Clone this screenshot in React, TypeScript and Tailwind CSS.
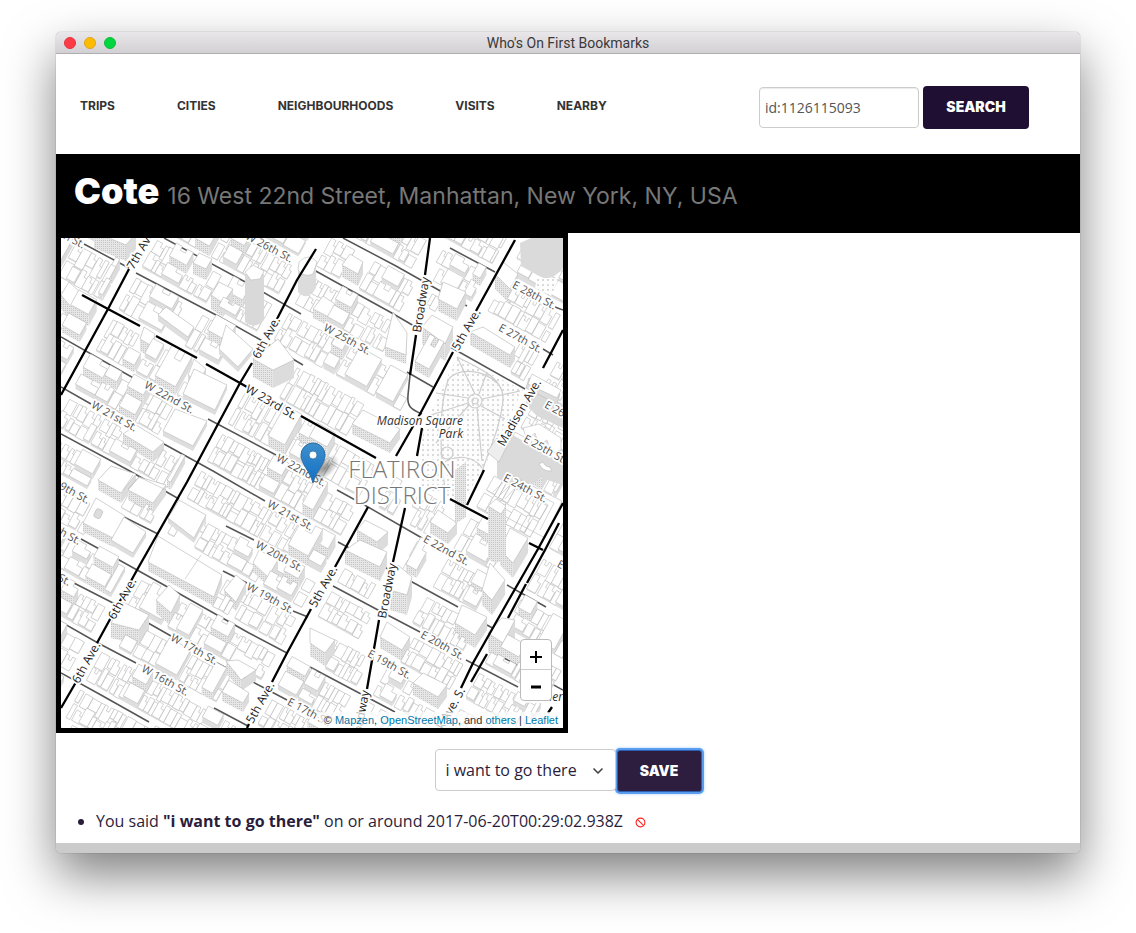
import React from "react";
import { ChevronDown } from "lucide-react";

type Point = [number, number];

const ANGLE = (29 * Math.PI) / 180;
const COS = Math.cos(ANGLE);
const SIN = Math.sin(ANGLE);

// Street grid space -> map space, with 6th Ave. and W 23rd St. as the origin.
const toMap = (s: number, t: number): Point => [
  179 + s * COS - t * SIN,
  145 + s * SIN + t * COS,
];

const fmt = (points: Point[]) =>
  points.map(([x, y]) => `${x.toFixed(1)},${y.toFixed(1)}`).join(" ");

const avenues = [-310, -151, 0, 172, 258, 341, 430];
const streets = [-310, -264, -221, -178, -134, -91, -48, 0, 47, 90, 132, 172, 214, 255, 296, 340, 382, 424];

const broadway: Point[] = [
  [369, 0], [364, 37], [355, 97], [349, 137], [351, 172], [361, 190],
  [356, 218], [344, 270], [332, 324], [318, 382], [306, 451], [299, 490],
];

const nearBroadway = (x: number, y: number) => {
  for (let i = 1; i < broadway.length; i++) {
    const [ax, ay] = broadway[i - 1];
    const [bx, by] = broadway[i];
    if (y >= ay && y <= by) {
      const k = (y - ay) / (by - ay);
      return Math.abs(x - (ax + (bx - ax) * k)) < 10;
    }
  }
  return false;
};

function random(seed: number) {
  let state = seed;
  return () => {
    state = (state * 1664525 + 1013904223) % 4294967296;
    return state / 4294967296;
  };
}

interface Building {
  y: number;
  roof: string;
  side: string;
  front: string;
  hatched: boolean;
}

// Roof corners (left, bottom, right, top) and height of the larger buildings.
const landmarks: number[][] = [
  [122, 156, 154, 172, 166, 147, 133, 131, 5],
  [102, 193, 132, 208, 146, 183, 114, 171, 5],
  [62, 196, 92, 214, 103, 204, 75, 187, 10],
  [97, 77, 127, 99, 133, 89, 105, 69, 6],
  [158, 111, 177, 129, 192, 111, 165, 87, 5],
  [192, 121, 212, 132, 233, 122, 217, 101, 18],
  [150, 57, 162, 65, 172, 51, 158, 44, 14],
  [132, 25, 145, 31, 151, 21, 138, 15, 11],
  [0, 57, 10, 69, 21, 56, 8, 44, 14],
  [33, -6, 65, 7, 75, -5, 45, -15, 16],
  [291, 186, 329, 205, 339, 191, 302, 172, 10],
  [361, 89, 384, 106, 392, 89, 371, 77, 17],
  [377, 61, 396, 71, 405, 54, 382, 44, 12],
  [324, 109, 345, 117, 346, 95, 332, 74, 9],
  [409, 94, 449, 117, 454, 109, 422, 89, 13],
  [434, 36, 449, 51, 457, 36, 442, 24, 15],
  [87, 324, 153, 359, 161, 337, 97, 298, 9],
  [22, 285, 52, 300, 64, 278, 35, 260, 9],
  [50, 302, 72, 315, 85, 294, 63, 279, 5],
  [50, 385, 78, 392, 88, 377, 62, 364, 15],
  [107, 280, 133, 300, 145, 277, 118, 262, 5],
  [192, 325, 207, 339, 217, 322, 198, 312, 9],
  [95, 362, 110, 375, 119, 357, 108, 347, 13],
  [165, 423, 180, 442, 195, 432, 177, 422, 11],
  [161, 454, 182, 465, 188, 455, 168, 442, 9],
  [67, 252, 92, 265, 105, 247, 78, 239, 10],
  [37, 242, 60, 255, 75, 236, 50, 228, 10],
  [163, 352, 175, 364, 185, 345, 175, 337, 9],
  [369, 284, 387, 295, 396, 285, 377, 272, 11],
  [394, 385, 414, 397, 426, 379, 401, 367, 13],
  [296, 292, 316, 304, 327, 294, 304, 282, 13],
  [284, 312, 319, 329, 326, 314, 299, 302, 14],
  [421, 352, 431, 362, 444, 342, 429, 325, 15],
  [319, 399, 341, 412, 349, 399, 326, 384, 11],
  [352, 445, 377, 459, 386, 447, 362, 435, 12],
  [329, 352, 346, 357, 351, 339, 337, 327, 20],
  [439, 312, 452, 325, 467, 300, 449, 290, 15],
  [249, 405, 264, 415, 274, 402, 249, 390, 13],
  [427, 395, 442, 405, 454, 382, 441, 380, 19],
  [79, 101, 91, 108, 94, 96, 83, 89, 12],
  [127, 137, 138, 144, 145, 131, 133, 121, 8],
  [281, 27, 297, 36, 302, 24, 289, 16, 12],
  [252, 71, 268, 79, 274, 66, 262, 58, 9],
];

const nearLandmark = (x: number, y: number) =>
  landmarks.some(([ax, ay, bx, by, cx, cy, dx, dy, h]) => {
    const corners: Point[] = [[ax, ay + h], [bx, by + h], [cx, cy], [dx, dy]];
    return corners.every(([px, py], i) => {
      const [qx, qy] = corners[(i + 1) % 4];
      return (qx - px) * (y - py) - (qy - py) * (x - px) < 25;
    });
  });

function makeBuildings(): Building[] {
  const next = random(2207);
  const list: Building[] = landmarks.map(([ax, ay, bx, by, cx, cy, dx, dy, h]) => ({
    y: by + h,
    roof: fmt([[ax, ay], [bx, by], [cx, cy], [dx, dy]]),
    front: fmt([[ax, ay], [ax, ay + h], [bx, by + h], [bx, by]]),
    side: fmt([[bx, by], [bx, by + h], [cx, cy + h], [cx, cy]]),
    hatched: h > 8,
  }));
  const add = (s0: number, s1: number, t0: number, t1: number, h: number) => {
    const [cx, cy] = toMap((s0 + s1) / 2, (t0 + t1) / 2);
    if (cx < -25 || cx > 530 || cy < -30 || cy > 520) return;
    if (nearBroadway(cx, cy) || nearLandmark(cx, cy)) return;
    const raise = ([x, y]: Point): Point => [x, y - h];
    const sw = s1 - s0;
    const td = t1 - t0;
    let shape: Point[] = [[s0, t0], [s1, t0], [s1, t1], [s0, t1]];
    const kind = next();
    if (sw > 9 && td > 10 && kind < 0.3) {
      shape = [[s0, t0], [s0 + sw * 0.35, t0], [s0 + sw * 0.35, t0 + td * 0.3], [s0 + sw * 0.65, t0 + td * 0.3], [s0 + sw * 0.65, t0], [s1, t0], [s1, t1], [s0, t1]];
    } else if (sw > 5 && kind < 0.45) {
      shape = [[s0, t0], [s0 + sw * 0.6, t0], [s0 + sw * 0.6, t0 + td * 0.35], [s1, t0 + td * 0.35], [s1, t1], [s0, t1]];
    }
    const start = toMap(s0, t1);
    const corner = toMap(s1, t1);
    const end = toMap(s1, shape.length === 6 ? t0 + td * 0.35 : t0);
    list.push({
      y: corner[1],
      roof: fmt(shape.map(([s, t]) => raise(toMap(s, t)))),
      front: fmt([raise(start), start, corner, raise(corner)]),
      side: fmt([raise(corner), corner, end, raise(end)]),
      hatched: h > 7,
    });
  };
  for (let a = 1; a < avenues.length; a++) {
    for (let b = 1; b < streets.length; b++) {
      const left = avenues[a - 1] + 10;
      const right = avenues[a] - 9;
      const top = streets[b - 1] + 7;
      const bottom = streets[b] - 5;
      const inPark = a === 4 && b >= 5 && b <= 7;
      if (inPark) continue;
      let s = left;
      while (s < right - 2) {
        const big = next() < 0.16;
        const width = Math.min(right - s, big ? 12 + next() * 14 : 4 + next() * 6);
        const height = big ? 4 + next() * 8 : next() * 1.5;
        if (big && next() < 0.3) {
          add(s, s + width, top, bottom, height);
        } else {
          const middle = (top + bottom) / 2 + (next() - 0.5) * 6;
          add(s, s + width, top, middle - 3 * next(), height);
          add(s, s + width, middle + next() * 3, bottom, big ? height * 0.6 : next() * 3);
        }
        s += width + (next() < 0.15 ? 2 : 0);
      }
    }
  }
  return list.sort((p, q) => p.y - q.y);
}

const buildings = makeBuildings();

const minorStreets =
  "M23 6 68 30M75 35 157 78 198 101 242 127M103 0 188 46 240 76M242 26 329 74 384 106 464 151M282 0 335 28 406 68M389 10 434 34M494 69 502 72M482 111 492 117M346 134 372 149M0 99 83 146M147 181 215 217M276 252 307 269 361 300M446 347 485 369M0 149 30 166M103 206 152 233 204 263M277 304 353 345 397 369M426 387 446 398M0 196 67 232 118 261M165 288 193 302M272 348 317 372 359 394M405 422 457 449M63 279 97 296M162 333 186 345M232 373 247 379M20 301 42 313 103 347 188 395 226 415M249 429 334 474M9 343 52 365 110 398M156 425 226 462M0 384 37 405 75 425M153 470 187 488M0 435 40 457 88 484M443 420 502 452";

const primaryRoads =
  "M68 31 47 71 0 157M255 11 236 42 216 81M191 125 179 145 157 186 126 244 76 332 36 405M22 432 0 470M454 2 415 73M392 114 359 176 335 218M307 269 274 329M250 371 226 415 211 444M188 486 186 490M502 92 482 130M423 232 406 267M502 265 477 311 446 365 412 425 400 450M498 285 484 312 466 345M465 346 447 380M426 416 410 444M491 469 487 475M369 0 364 37M355 97 349 137M361 190 356 218M344 270 332 324M318 382 306 451M21 57 47 71 79 88M95 98 136 120M145 126 179 145 186 149M240 178 315 220M389 261 427 281M468 305 482 312";

interface StreetLabel {
  text: string;
  x: number;
  y: number;
  angle: number;
  major?: boolean;
}

const labels: StreetLabel[] = [
  { text: "7th Ave.", x: 81, y: 11, angle: -60, major: true },
  { text: "6th Ave.", x: 206, y: 100, angle: -62, major: true },
  { text: "5th Ave.", x: 406, y: 92, angle: -60, major: true },
  { text: "Broadway", x: 361, y: 67, angle: -81, major: true },
  { text: "Madison Ave.", x: 459, y: 175, angle: -60, major: true },
  { text: "W 23rd St.", x: 210, y: 165, angle: 30, major: true },
  { text: "5th Ave.", x: 263, y: 349, angle: -61, major: true },
  { text: "Broadway", x: 327, y: 353, angle: -79, major: true },
  { text: "6th Ave.", x: 62, y: 361, angle: -61, major: true },
  { text: "6th Ave.", x: 26, y: 425, angle: -61, major: true },
  { text: "5th Ave.", x: 200, y: 465, angle: -61, major: true },
  { text: "Broadway", x: 300, y: 480, angle: -79, major: true },
  { text: "Park Ave. S.", x: 386, y: 479, angle: -61, major: true },
  { text: "W 26th St.", x: 208, y: 10, angle: 28 },
  { text: "W 28th St.", x: 0, y: -4, angle: 28 },
  { text: "W 25th St.", x: 286, y: 102, angle: 29 },
  { text: "E 28th St.", x: 473, y: 58, angle: 28 },
  { text: "E 27th St.", x: 459, y: 101, angle: 29 },
  { text: "E 26th St.", x: 505, y: 178, angle: 29 },
  { text: "E 25th St.", x: 484, y: 212, angle: 29 },
  { text: "E 24th St.", x: 464, y: 251, angle: 28 },
  { text: "W 22nd St.", x: 108, y: 160, angle: 29 },
  { text: "W 21st St.", x: 53, y: 179, angle: 29 },
  { text: "W 22nd St.", x: 240, y: 233, angle: 29 },
  { text: "W 21st St.", x: 229, y: 278, angle: 29 },
  { text: "W 20th St.", x: 218, y: 319, angle: 29 },
  { text: "W 19th St.", x: 209, y: 361, angle: 29 },
  { text: "W 19th St.", x: 5, y: 251, angle: 29 },
  { text: "W 18th St.", x: -4, y: 292, angle: 29 },
  { text: "W 17th St.", x: -14, y: 333, angle: 29 },
  { text: "W 17th St.", x: 133, y: 412, angle: 29 },
  { text: "W 16th St.", x: 104, y: 443, angle: 29 },
  { text: "E 22nd St.", x: 385, y: 313, angle: 29 },
  { text: "E 20th St.", x: 381, y: 408, angle: 29 },
  { text: "E 19th St.", x: 328, y: 427, angle: 29 },
  { text: "E 17th St.", x: 248, y: 475, angle: 28 },
  { text: "E 21st St.", x: 517, y: 337, angle: 29 },
];

function CityMap() {
  return (
    <svg
      viewBox="0 0 502 490"
      preserveAspectRatio="xMidYMid slice"
      className="block h-full w-full bg-white"
      role="img"
      aria-label="Map of the Flatiron District"
    >
      <defs>
        <pattern id="hatch" width="2" height="2" patternUnits="userSpaceOnUse">
          <rect width="2" height="2" fill="#e6e6e6" />
          <rect width="1" height="1" fill="#c6c6c6" />
        </pattern>
        <pattern id="dots" width="5" height="5" patternUnits="userSpaceOnUse">
          <rect width="5" height="5" fill="#fdfdfd" />
          <rect x="1" y="1" width="2" height="2" fill="#dadada" />
        </pattern>
        <radialGradient id="markerShadow">
          <stop offset="0" stopColor="#000" stopOpacity="0.45" />
          <stop offset="1" stopColor="#000" stopOpacity="0" />
        </radialGradient>
        <linearGradient id="markerBlue" x1="0" y1="0" x2="0" y2="1">
          <stop offset="0" stopColor="#3e90cb" />
          <stop offset="1" stopColor="#126fc6" />
        </linearGradient>
      </defs>

      <path d={minorStreets} fill="none" stroke="#555" strokeWidth="1.5" />
      <g strokeWidth="0.6" strokeLinejoin="round">
        {buildings.map((b, i) => (
          <React.Fragment key={i}>
            <polygon points={b.side} fill="#dcdcdc" />
            <polygon points={b.front} fill={b.hatched ? "url(#hatch)" : "#dedede"} />
            <polygon points={b.roof} fill="#fff" stroke="#b4b4b4" />
          </React.Fragment>
        ))}
      </g>

      <path d="M396 119 462 152 421 233 402 262 359 250 362 190Z" fill="url(#dots)" />
      <g fill="none" stroke="#cdcdcd" strokeWidth="1.2">
        <circle cx="414" cy="163" r="7" />
        <circle cx="414" cy="163" r="3" />
        <path d="M414 156 396 119M421 161 459 153M420 168 444 181M416 170 421 223M408 167 375 205M407 160 375 155M407 165 367 178M418 156 426 134M396 119C418 130 444 140 442 163 438 195 428 210 421 234M384 252C376 190 381 160 387 142 396 130 420 130 436 145M375 230C395 212 415 220 421 230" />
        <circle cx="386" cy="215" r="6" />
      </g>
      <path d="M349 137 347 157C346 168 349 171 361 176" fill="none" stroke="#555" strokeWidth="1.6" />

      <g stroke="#b9b9b9" strokeWidth="0.6">
        <path d="M184 36V84Q194 92 203 82V36Z" fill="#d9d9d9" stroke="none" />
        <path d="M184 34 192 27 203 33 199 41 190 42Z" fill="#fff" />
        <path d="M237 28V54Q246 64 255 50V28Z" fill="#dcdcdc" stroke="none" />
        <path d="M238 24Q248 14 256 24L252 36Q243 40 237 32Z" fill="#fff" />
        <path d="M459 5 470 0H502V30Q490 45 478 38L460 28Z" fill="#dadada" stroke="none" />
        <path d="M476 40H498L490 58 474 50Z" fill="url(#dots)" stroke="none" />
        <path d="M470 150 502 166V190L476 178 464 166Z" fill="#dadada" stroke="none" />
        <path d="M436 205 450 196 468 206 502 224V247L480 240 462 252 436 240Z" fill="#dadada" stroke="none" />
        <path d="M462 190 466 202 474 195 478 208 486 202 490 216 500 212V200L478 186Z" fill="#fff" />
        <path d="M478 226Q482 234 491 233L489 229Q484 229 482 224Z" fill="#fff" />
        <path d="M426 214 436 200 446 208 438 224Z" fill="#eee" />
        <path d="M394 232 405 224V279L394 286Z" fill="url(#hatch)" stroke="none" />
        <path d="M432 254 450 237 501 263 484 300 445 279M438 258 453 243 493 265 479 292M444 261 455 249 487 267 477 284" fill="none" />
        <path d="M427 265V320Q436 330 445 318V266Z" fill="url(#hatch)" stroke="none" />
        <path d="M427 268 435 261 445 268 440 276Z" fill="#fff" />
        <path d="M468 140 499 156 496 166 465 150Z" fill="#ddd" />
        <path d="M471 136 500 152 496 160 467 146Z" fill="#fff" />
        <rect x="34" y="271" width="7" height="9" rx="2" transform="rotate(25 37 275)" fill="#ddd" />
        <path d="M67 251 78 239 105 252M124 341 140 317M62 252 72 237" fill="none" />
      </g>

      <path d={primaryRoads} fill="none" stroke="#000" strokeWidth="2.3" strokeLinejoin="round" />

      <g stroke="#fff" strokeWidth="3.5" strokeLinejoin="round" paintOrder="stroke" fontFamily='"Open Sans", "Noto Sans", sans-serif'>
        {labels.map((label, i) => (
          <text
            key={i}
            transform={`translate(${label.x} ${label.y}) rotate(${label.angle})`}
            fontSize={label.major ? 12 : 11}
            fill={label.major ? "#1c1c1c" : "#555"}
            dominantBaseline="middle"
            textAnchor="middle"
          >
            {label.text}
          </text>
        ))}
        <g fontSize="12" fontStyle="italic" fill="#333" textAnchor="end">
          <text x="402" y="187">Madison Square</text>
          <text x="402" y="200">Park</text>
          <text x="502" y="463">Gramer</text>
        </g>
        <g fontSize="24" fontWeight="300" fill="#777" textAnchor="middle" strokeWidth="4">
          <text x="341" y="240">FLATIRON</text>
          <text x="341" y="266">DISTRICT</text>
        </g>
      </g>

      <ellipse cx="264" cy="230" rx="17" ry="9" transform="rotate(-42 264 230)" fill="url(#markerShadow)" />
      <path
        d="M252 245C249 233 240 226 240 217A12 12 0 0 1 264 217C264 226 255 233 252 245Z"
        fill="url(#markerBlue)"
        stroke="#2e6d9f"
        strokeWidth="1"
      />
      <circle cx="252" cy="217" r="4" fill="#fff" stroke="#2e6d9f" strokeWidth="0.8" />
    </svg>
  );
}

const navItems = ["Trips", "Cities", "Neighbourhoods", "Visits", "Nearby"];

export default function App() {
  return (
    <div className="min-h-screen bg-white px-14 pt-8 pb-20 font-['Open_Sans',sans-serif] text-[#2a1d3c]">
      <div className="overflow-hidden rounded-[5px] shadow-[0_0_1px_rgba(0,0,0,0.6),0_22px_50px_rgba(0,0,0,0.5)]">
        <header className="grid h-[22px] grid-cols-[1fr_auto_1fr] items-center border-b border-[#b0aeb0] bg-linear-to-b from-[#e9e7e9] to-[#d2d0d2] px-2">
          <div className="flex gap-2">
            <button aria-label="Close" className="size-3 rounded-full border border-[#e2343c] bg-[#fc3b47]" />
            <button aria-label="Minimize" className="size-3 rounded-full border border-[#e0a31b] bg-[#fdbc00]" />
            <button aria-label="Zoom" className="size-3 rounded-full border border-[#15b83a] bg-[#00d63d]" />
          </div>
          <span className="pt-px font-[Roboto,sans-serif] text-sm leading-5 text-[#3a383c]">Who's On First Bookmarks</span>
        </header>

        <div className="bg-white">
          <div className="flex h-[100px] items-center justify-between pr-[51px] pl-6">
            <nav className="flex gap-[62px] pt-1 font-[Inter,sans-serif] text-xs leading-5 font-bold text-[#333] uppercase">
              {navItems.map((item) => (
                <a key={item} href={`#${item.toLowerCase()}`}>
                  {item}
                </a>
              ))}
            </nav>
            <form className="flex items-center gap-1 pt-[7px]" onSubmit={(e) => e.preventDefault()}>
              <input
                aria-label="Search"
                defaultValue="id:1126115093"
                className="h-[41px] w-40 rounded border border-[#ccc] px-[5px] text-sm text-[#555] shadow-[inset_0_1px_1px_rgba(0,0,0,0.08)] outline-none"
              />
              <button className="h-[43px] w-[106px] rounded bg-[#1f0f33] pb-0.5 font-[Inter,sans-serif] text-sm font-black text-white">
                SEARCH
              </button>
            </form>
          </div>

          <h1 className="h-[79px] bg-black px-[18px] pt-[11px] font-[Inter,sans-serif] text-4xl leading-[52px] font-black text-white">
            Cote<small className="ml-2 text-[23px] font-normal text-[#777]">16 West 22nd Street, Manhattan, New York, NY, USA</small>
          </h1>

          <div className="relative h-[500px] w-1/2 border-5 border-black">
            <CityMap />
            <div className="absolute right-[11px] bottom-[27px] flex w-8 flex-col rounded border border-[#bbb] bg-white text-black">
              <button aria-label="Zoom in" className="flex h-[30px] items-center justify-center border-b border-[#ccc] pt-1">
                <svg viewBox="0 0 12 12" className="size-3" stroke="currentColor" strokeWidth="2">
                  <path d="M0 6H12M6 0V12" />
                </svg>
              </button>
              <button aria-label="Zoom out" className="flex h-[30px] items-center justify-center pt-1">
                <svg viewBox="0 0 12 12" className="size-3" stroke="currentColor" strokeWidth="3">
                  <path d="M1 6H11" />
                </svg>
              </button>
            </div>
            <div className="absolute right-0 bottom-0 bg-white/70 px-[5px] font-['Liberation_Sans',sans-serif] text-[11px] leading-4 text-[#333]">
              © <a href="#mapzen" className="text-[#0078a8]">Mapzen</a>, <a href="#osm" className="text-[#0078a8]">OpenStreetMap</a>, and{" "}
              <a href="#others" className="text-[#0078a8]">others</a> | <a href="#leaflet" className="text-[#0078a8]">Leaflet</a>
            </div>
          </div>

          <form className="flex justify-center gap-px pt-4" onSubmit={(e) => e.preventDefault()}>
            <div className="relative">
              <select
                aria-label="Status"
                className="h-[42px] w-[181px] appearance-none rounded border border-[#ccc] bg-white pr-8 pb-px pl-2.5 text-base text-[#2a1d3c] outline-none"
              >
                <option>i want to go there</option>
              </select>
              <ChevronDown className="pointer-events-none absolute top-3.5 right-2.5 size-4 text-[#444]" strokeWidth={2.5} />
            </div>
            <button className="mt-px h-[42px] w-[85px] rounded-[3px] border border-[#2c5fb0] bg-[#2d1e40] font-[Inter,sans-serif] text-sm font-black text-white shadow-[0_0_0_2px_#5a9df0,0_0_3px_2px_rgba(110,175,250,0.6)]">
              SAVE
            </button>
          </form>

          <ul className="list-disc pt-[17px] pr-6 pb-2.5 pl-10">
            <li className="text-base leading-6">
              You said <strong>"i want to go there"</strong> on or around 2017-06-20T00:29:02.938Z
              <button aria-label="Remove" className="ml-3 align-middle text-[#f22]">
                <svg viewBox="0 0 12 12" className="size-[11px]" fill="none" stroke="currentColor" strokeWidth="1.2">
                  <circle cx="6" cy="6" r="4.8" />
                  <path d="M2.6 2.6 9.4 9.4" />
                </svg>
              </button>
            </li>
          </ul>
        </div>
        <footer className="h-2.5 bg-[#cbcbcb]" />
      </div>
    </div>
  );
}
